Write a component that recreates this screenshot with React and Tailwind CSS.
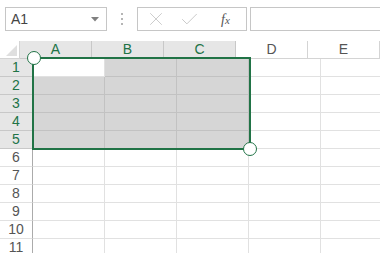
import { X, Check } from 'lucide-react';

const COLS = ['A', 'B', 'C', 'D', 'E'];
const ROWS = [1, 2, 3, 4, 5, 6, 7, 8, 9, 10, 11];
const GREEN = 'text-[#217346]';

function isSelected(row, col) {
  return row <= 5 && col < 3;
}

function NameBox() {
  return (
    <div className="flex h-[24px] w-[102px] items-center justify-between border border-[#c6c6c6] bg-white pl-[5px] pr-[7px]">
      <span className="text-[14px] text-[#444]">A1</span>
      <svg width="8" height="5" viewBox="0 0 8 5" aria-hidden="true">
        <path d="M0 0h8L4 4.5z" fill="#808080" />
      </svg>
    </div>
  );
}

function Toolbar() {
  return (
    <div className="flex h-[41px] items-start pt-[7px] pl-[5px]">
      <NameBox />
      <div className="flex w-[30px] flex-col items-center gap-[3px] pt-[6px]">
        <span className="h-[2px] w-[2px] bg-[#b5b5b5]" />
        <span className="h-[2px] w-[2px] bg-[#b5b5b5]" />
        <span className="h-[2px] w-[2px] bg-[#b5b5b5]" />
      </div>
      <div className="flex h-[24px] w-[110px] items-center border border-[#c6c6c6] bg-white">
        <X size={22} strokeWidth={1} className="ml-[7px] text-[#c8c8c8]" />
        <Check size={21} strokeWidth={1.1} className="ml-[12px] text-[#c8c8c8]" />
        <span className="ml-[21px] font-['Liberation_Serif',serif] text-[14px] italic text-[#555]">
          f<span className="text-[11px]">x</span>
        </span>
      </div>
      <div className="ml-[3px] h-[24px] flex-1 border border-r-0 border-[#c6c6c6] bg-white" />
    </div>
  );
}

function HeaderRow() {
  return (
    <div className="flex h-[18px]">
      <div className="relative w-[33px] border-r border-b border-[#d4d4d4] bg-white">
        <svg className="absolute right-[2px] bottom-[2px]" width="11" height="11" viewBox="0 0 11 11" aria-hidden="true">
          <path d="M11 0V11H0z" fill="#dfdfdf" />
        </svg>
      </div>
      {COLS.map((c, i) => (
        <div
          key={c}
          className={
            'flex w-[72px] shrink-0 items-center justify-center border-r border-b text-[14px] ' +
            (i < 3
              ? 'border-[#c8c8c8] bg-[#e6e6e6] ' + GREEN
              : 'border-[#d4d4d4] bg-white text-[#555]')
          }
        >
          {c}
        </div>
      ))}
    </div>
  );
}

function GridRow({ row }) {
  const sel = row <= 5;
  return (
    <div className="flex h-[18px]">
      <div
        className={
          'flex w-[33px] shrink-0 items-center justify-center border-r border-b text-[14px] ' +
          (sel
            ? 'border-r-[#ababab] border-b-[#c8c8c8] bg-[#e6e6e6] ' + GREEN
            : 'border-r-[#ababab] border-b-[#e1e1e1] bg-white text-[#555]')
        }
      >
        {row}
      </div>
      {COLS.map((c, i) => {
        const active = row === 1 && i === 0;
        const inSel = isSelected(row, i);
        return (
          <div
            key={c}
            className={
              'w-[72px] shrink-0 border-r border-b ' +
              (active
                ? 'border-[#e1e1e1] bg-white'
                : inSel
                  ? 'border-[#c2c2c2] bg-[#d6d6d6]'
                  : 'border-[#e1e1e1] bg-white')
            }
          />
        );
      })}
    </div>
  );
}

export default function App() {
  return (
    <div className="relative h-[253px] w-[380px] overflow-hidden bg-white font-['Liberation_Sans',Arial,sans-serif]">
      <Toolbar />
      <HeaderRow />
      {ROWS.map((r) => (
        <GridRow key={r} row={r} />
      ))}

      {/* selection outline and handles */}
      <div className="pointer-events-none absolute left-[32px] top-[57px] h-[93px] w-[219px] border-2 border-[#217346]" />
      <div className="absolute left-[27px] top-[51px] h-[14px] w-[14px] rounded-full border-[1.5px] border-[#217346] bg-white" />
      <div className="absolute left-[243px] top-[142px] h-[14px] w-[14px] rounded-full border-[1.5px] border-[#217346] bg-white" />
    </div>
  );
}
